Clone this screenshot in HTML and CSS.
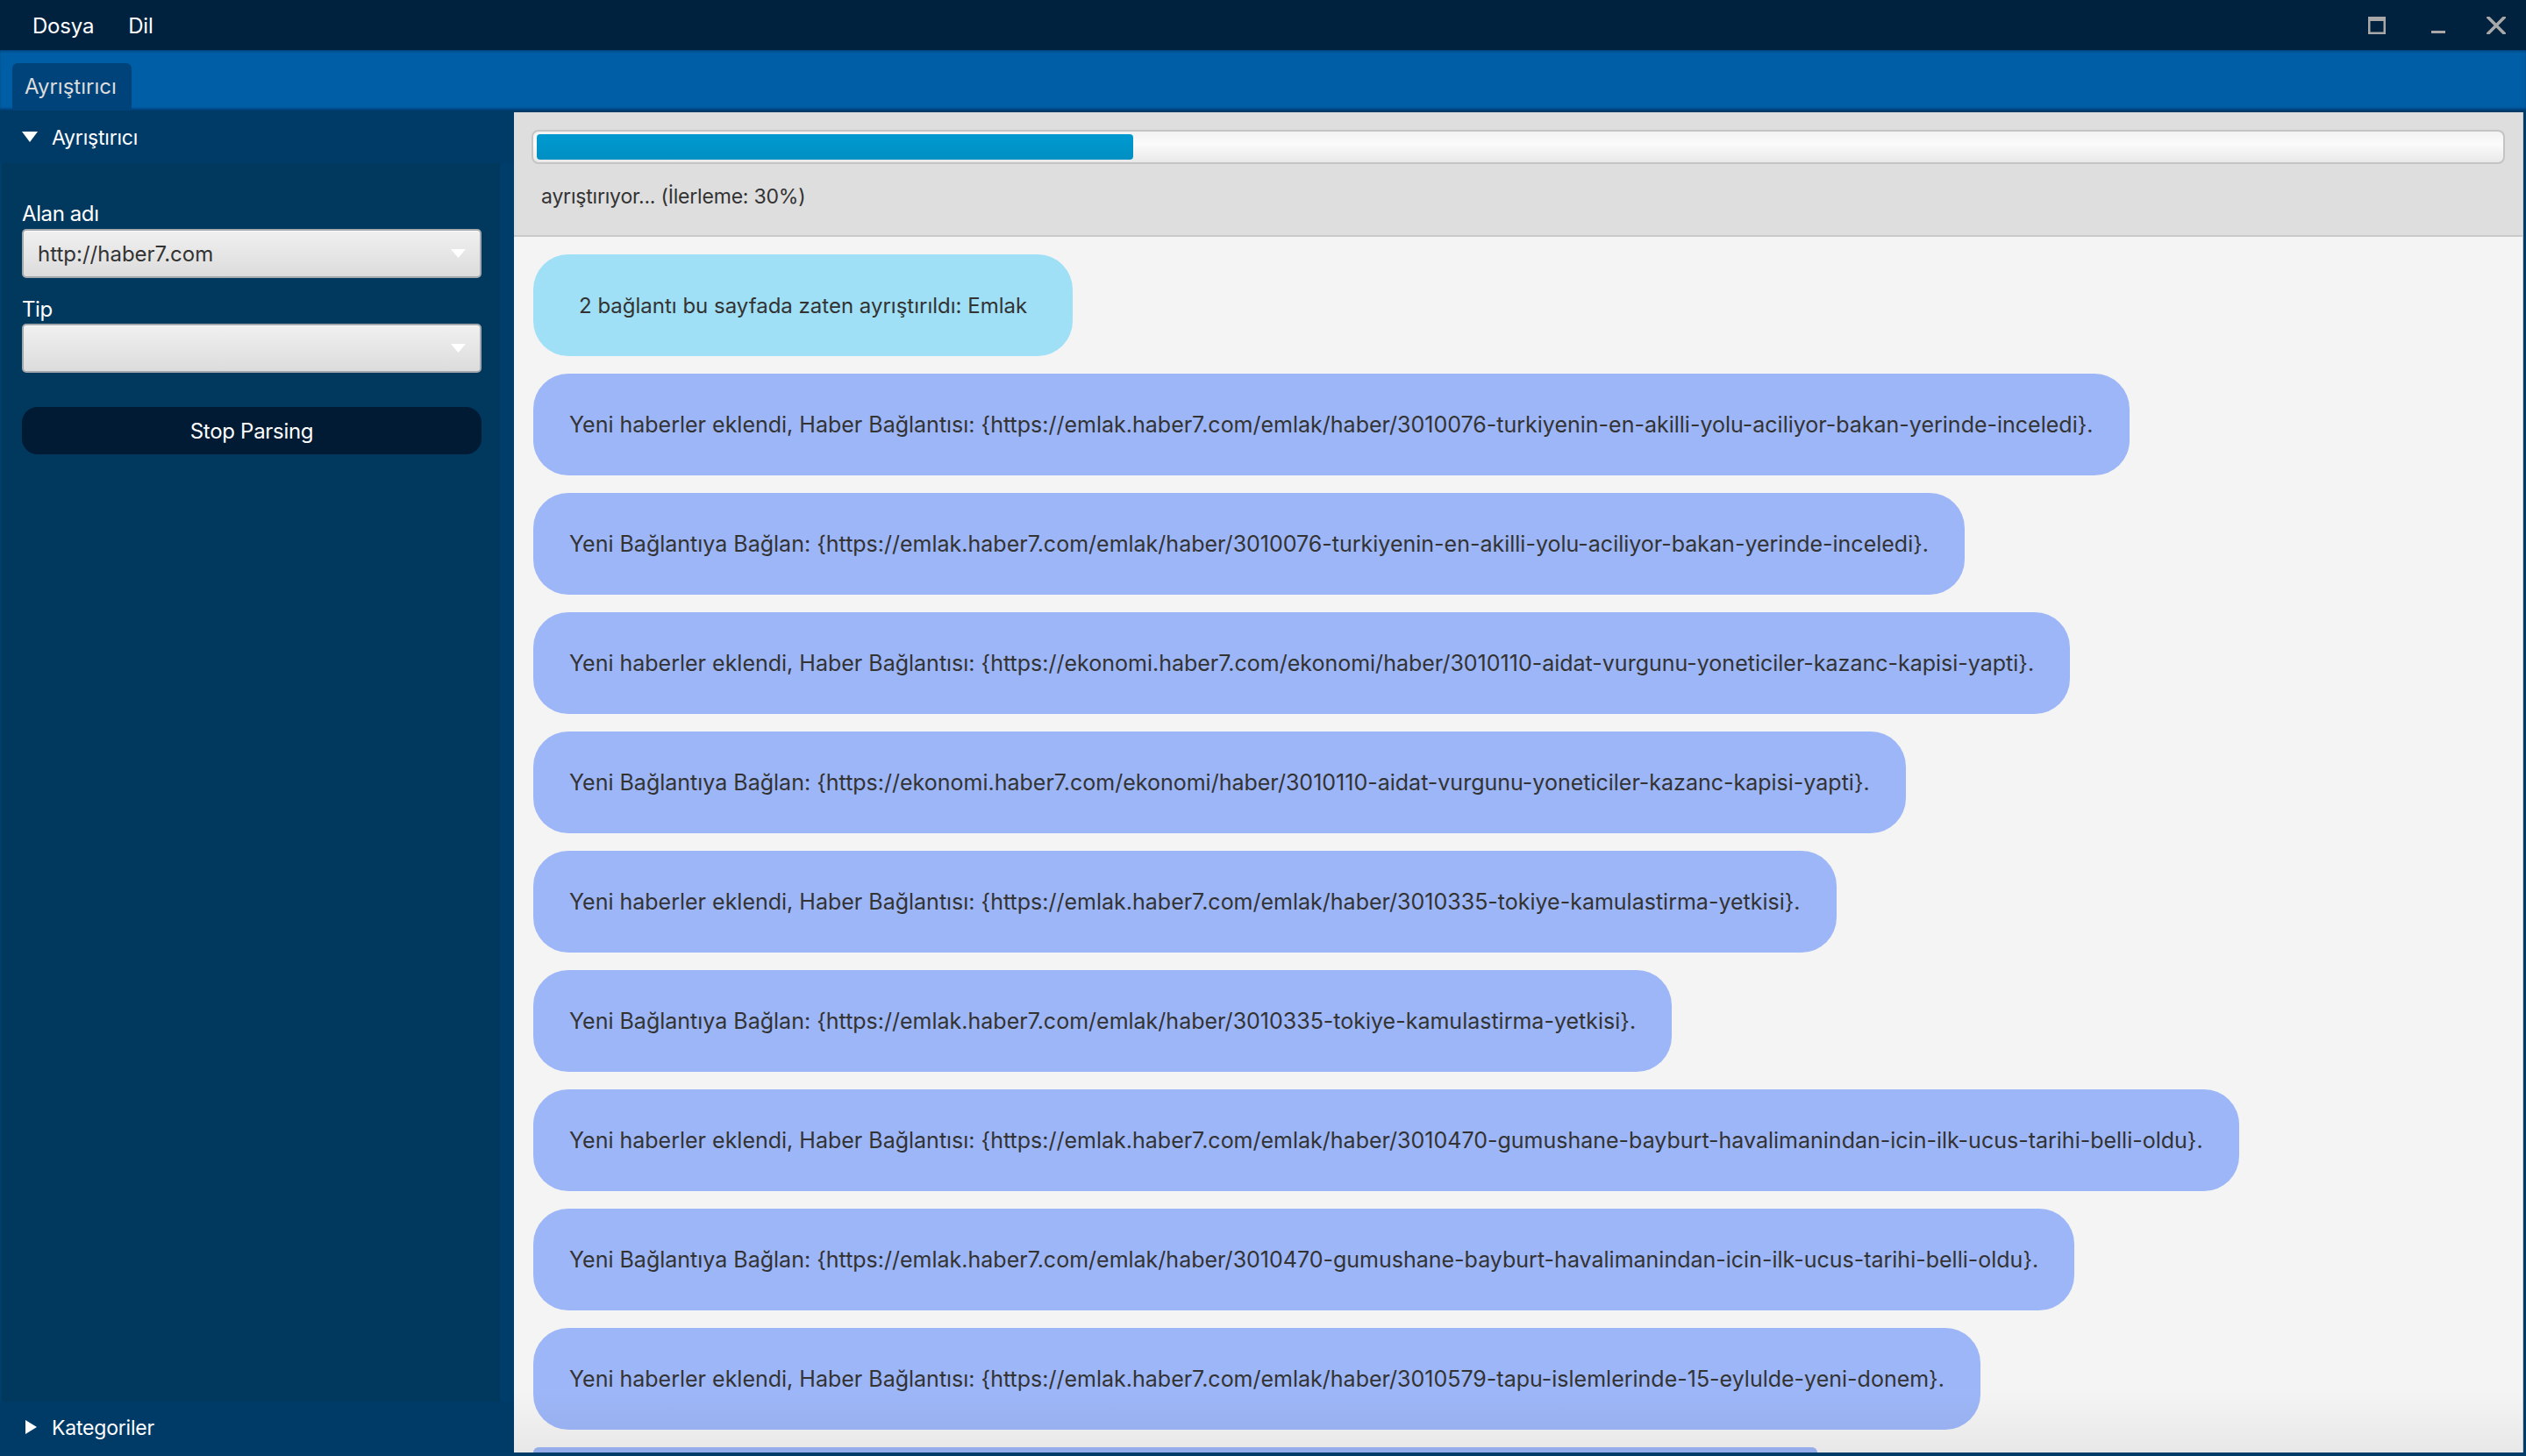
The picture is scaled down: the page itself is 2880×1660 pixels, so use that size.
FILE: index.html
```html
<!DOCTYPE html>
<html lang="tr">
<head>
<meta charset="utf-8">
<title>Ayrıştırıcı</title>
<link rel="stylesheet" href="styles.css">
</head>
<body>
<div class="window">
  <div class="menubar">
    <span class="menu-item">Dosya</span>
    <span class="menu-item">Dil</span>
    <div class="win-controls">
      <svg class="wc wc-max" width="20" height="20" viewBox="0 0 20 20"><rect x="1.25" y="1.25" width="17.5" height="17.5" fill="none" stroke="#a8a8a8" stroke-width="2.5"/><rect x="0" y="0" width="20" height="5" fill="#a8a8a8"/></svg>
      <svg class="wc wc-min" width="16" height="20" viewBox="0 0 16 20"><rect x="0" y="16" width="16" height="3" fill="#a8a8a8"/></svg>
      <svg class="wc wc-close" width="22" height="20" viewBox="0 0 22 20"><path d="M2 1 L20 19 M20 1 L2 19" stroke="#a8a8a8" stroke-width="3.6" stroke-linecap="square"/></svg>
    </div>
  </div>
  <div class="tabbar">
    <div class="tab">Ayrıştırıcı</div>
  </div>
  <div class="main">
    <aside class="sidebar">
      <div class="acc-header">
        <svg class="acc-arrow" width="18" height="12" viewBox="0 0 18 12"><path d="M0 0 H18 L9 12 Z" fill="#ffffff"/></svg>
        <span>Ayrıştırıcı</span>
      </div>
      <div class="acc-content">
        <label class="field-label">Alan adı</label>
        <div class="combo">
          <span class="combo-text">http://haber7.com</span>
          <svg class="combo-arrow" width="17" height="10" viewBox="0 0 17 10"><path d="M0 0 H17 L8.5 10 Z" fill="#ffffff"/></svg>
        </div>
        <label class="field-label field-label-tip">Tip</label>
        <div class="combo">
          <span class="combo-text"></span>
          <svg class="combo-arrow" width="17" height="10" viewBox="0 0 17 10"><path d="M0 0 H17 L8.5 10 Z" fill="#ffffff"/></svg>
        </div>
        <button class="stop-btn">Stop Parsing</button>
      </div>
      <div class="acc-header acc-header-bottom">
        <svg class="acc-arrow-right" width="13" height="16" viewBox="0 0 13 16"><path d="M0 0 L13 8 L0 16 Z" fill="#ffffff"/></svg>
        <span>Kategoriler</span>
      </div>
    </aside>
    <section class="content">
      <div class="status-header">
        <div class="progress">
          <div class="progress-fill" style="width: 30.4%"></div>
        </div>
        <div class="status-text">ayrıştırıyor... (İlerleme: 30%)</div>
      </div>
      <div class="messages">
        <div class="bubble bubble-info">2 bağlantı bu sayfada zaten ayrıştırıldı: Emlak</div>
        <div class="bubble">Yeni haberler eklendi, Haber Bağlantısı: {https://emlak.haber7.com/emlak/haber/3010076-turkiyenin-en-akilli-yolu-aciliyor-bakan-yerinde-inceledi}.</div>
        <div class="bubble">Yeni Bağlantıya Bağlan: {https://emlak.haber7.com/emlak/haber/3010076-turkiyenin-en-akilli-yolu-aciliyor-bakan-yerinde-inceledi}.</div>
        <div class="bubble">Yeni haberler eklendi, Haber Bağlantısı: {https://ekonomi.haber7.com/ekonomi/haber/3010110-aidat-vurgunu-yoneticiler-kazanc-kapisi-yapti}.</div>
        <div class="bubble">Yeni Bağlantıya Bağlan: {https://ekonomi.haber7.com/ekonomi/haber/3010110-aidat-vurgunu-yoneticiler-kazanc-kapisi-yapti}.</div>
        <div class="bubble">Yeni haberler eklendi, Haber Bağlantısı: {https://emlak.haber7.com/emlak/haber/3010335-tokiye-kamulastirma-yetkisi}.</div>
        <div class="bubble">Yeni Bağlantıya Bağlan: {https://emlak.haber7.com/emlak/haber/3010335-tokiye-kamulastirma-yetkisi}.</div>
        <div class="bubble">Yeni haberler eklendi, Haber Bağlantısı: {https://emlak.haber7.com/emlak/haber/3010470-gumushane-bayburt-havalimanindan-icin-ilk-ucus-tarihi-belli-oldu}.</div>
        <div class="bubble">Yeni Bağlantıya Bağlan: {https://emlak.haber7.com/emlak/haber/3010470-gumushane-bayburt-havalimanindan-icin-ilk-ucus-tarihi-belli-oldu}.</div>
        <div class="bubble">Yeni haberler eklendi, Haber Bağlantısı: {https://emlak.haber7.com/emlak/haber/3010579-tapu-islemlerinde-15-eylulde-yeni-donem}.</div>
        <div class="bubble bubble-partial"></div>
      </div>
    </section>
  </div>
</div>
</body>
</html>
```

FILE: styles.css
```css
* { box-sizing: border-box; }

html, body {
  margin: 0;
  padding: 0;
}

body {
  width: 2880px;
  height: 1660px;
  overflow: hidden;
  background: #013c69;
  font-family: "Inter", "Noto Sans", sans-serif;
  font-size: 24px;
}

.window {
  display: flex;
  flex-direction: column;
  height: 1660px;
}

.menubar {
  height: 57px;
  background: #00223f;
  display: flex;
  align-items: center;
  padding-left: 37px;
  color: #ffffff;
  flex-shrink: 0;
}

.menu-item {
  font-size: 24px;
  margin-right: 39px;
  line-height: 1;
  position: relative;
  top: 1px;
  letter-spacing: -0.2px;
}

.win-controls {
  margin-left: auto;
  display: flex;
  align-items: center;
  padding-right: 23px;
  height: 57px;
}

.wc { display: block; }
.wc-max { margin-right: 52px; }
.wc-min { margin-right: 47px; }

.tabbar {
  height: 69px;
  background: #005ea6;
  padding: 15px 0 0 14px;
  display: flex;
  align-items: flex-end;
  flex-shrink: 0;
  box-shadow: inset 0 -3px 3px -1px rgba(0, 30, 70, 0.55), inset 0 3px 3px -2px rgba(0, 20, 50, 0.5);
}

.tab {
  height: 54px;
  width: 136px;
  background: #00437a;
  border-radius: 6px 6px 0 0;
  color: #dcdcdc;
  font-size: 24px;
  padding: 12px 0 0 14px;
}

.main {
  flex: 1;
  display: flex;
  min-height: 0;
  padding: 0 3px 4px 0;
}

.sidebar {
  width: 586px;
  flex-shrink: 0;
  display: flex;
  flex-direction: column;
  background: #003d6b;
}

.acc-header {
  height: 60px;
  flex-shrink: 0;
  display: flex;
  align-items: center;
  padding-left: 25px;
  color: #ffffff;
  font-size: 23px;
  letter-spacing: -0.2px;
  background: #003b68;
}

.acc-header span {
  margin-left: 16px;
  position: relative;
  top: 1px;
}

.acc-arrow { display: block; }

.acc-header-bottom {
  height: 58px;
  padding-left: 29px;
}

.acc-header-bottom span { margin-left: 17px; }

.acc-content {
  flex: 1;
  margin: 0 16px 0 2px;
  background: #01385e;
  padding: 43px 21px 0 23px;
  display: flex;
  flex-direction: column;
}

.field-label {
  color: #ffffff;
  font-size: 24px;
  line-height: 29px;
  margin-bottom: 3px;
  letter-spacing: -0.4px;
}

.field-label-tip {
  margin-top: 21px;
  margin-bottom: 2px;
}

.combo {
  height: 56px;
  border: 2px solid #a3a8ad;
  border-radius: 5px;
  background: linear-gradient(#f0f0f0, #dcdcdc);
  display: flex;
  align-items: center;
  padding: 0 16px 0 16px;
  box-shadow: inset 0 1px 0 #fafafa;
}

.combo-text {
  flex: 1;
  color: #333333;
  font-size: 24px;
}

.combo-arrow { display: block; }

.stop-btn {
  margin-top: 39px;
  height: 54px;
  border: none;
  border-radius: 18px;
  background: #001b33;
  color: #ffffff;
  font-family: "Inter", "Noto Sans", sans-serif;
  font-size: 24px;
  letter-spacing: -0.3px;
}

.content {
  flex: 1;
  display: flex;
  flex-direction: column;
  min-width: 0;
  margin-top: 2px;
  background: #f4f4f4;
  border-right: 1px solid #c8c8c8;
  overflow: hidden;
  position: relative;
}

.content::after {
  content: "";
  position: absolute;
  left: 0;
  right: 0;
  bottom: 0;
  height: 70px;
  background: linear-gradient(rgba(0, 0, 0, 0), rgba(0, 0, 0, 0.05));
  pointer-events: none;
}

.status-header {
  height: 142px;
  flex-shrink: 0;
  background: #dedede;
  border-bottom: 2px solid #c9c9c9;
  padding: 20px 20px 0 20px;
}

.progress {
  height: 39px;
  border: 2px solid #c4c4c4;
  border-radius: 8px;
  background: linear-gradient(#f2f2f2, #fbfbfb 40%, #e9e9e9);
  padding: 3px 4px;
}

.progress-fill {
  height: 100%;
  border-radius: 4px;
  background: linear-gradient(#009ad0, #008fc2);
}

.status-text {
  margin-top: 23px;
  padding-left: 11px;
  color: #333333;
  font-size: 23px;
  line-height: 29px;
  letter-spacing: -0.2px;
}

.messages {
  flex: 1;
  min-height: 0;
  overflow: hidden;
  display: flex;
  flex-direction: column;
  align-items: flex-start;
  gap: 20px;
  padding: 20px 22px;
}

.bubble {
  flex-shrink: 0;
  height: 116px;
  border-radius: 40px;
  background: #9db6f7;
  color: #333333;
  font-size: 25px;
  display: flex;
  align-items: center;
  padding: 0 41px;
  white-space: nowrap;
}

.bubble-info {
  background: #9fe0f7;
  font-size: 24px;
  padding: 0 52px;
}

.bubble-partial {
  width: 1464px;
  height: 6px;
  border-radius: 6px 6px 0 0;
  padding: 0;
}
```
